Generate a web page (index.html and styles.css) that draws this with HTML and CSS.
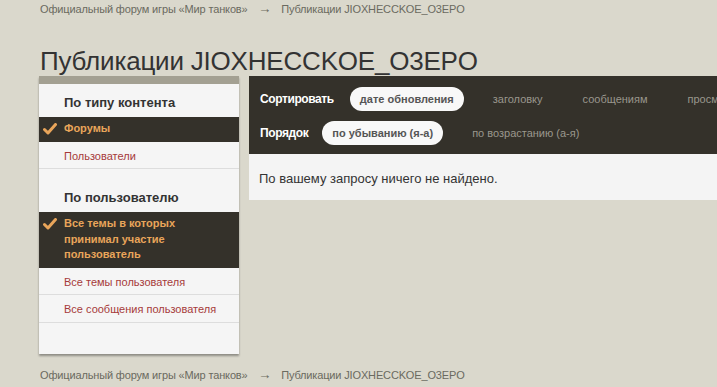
FILE: index.html
```html
<!DOCTYPE html>
<html lang="ru">
<head>
    <meta charset="UTF-8">
    <title>Публикации JIOXHECCKOE_O3EPO</title>
    <link rel="stylesheet" href="styles.css">
</head>
<body>
    <div class="page">
        <div class="breadcrumbs">
            <a href="#">Официальный форум игры «Мир танков»</a>
            <span class="arrow">→</span>
            <span>Публикации JIOXHECCKOE_O3EPO</span>
        </div>

        <h1 class="title">Публикации JIOXHECCKOE_O3EPO</h1>

        <div class="layout">
            <div class="sidebar">
                <div class="side-head">По типу контента</div>
                <ul class="side-list">
                    <li class="active">
                        <svg class="check" width="14" height="12" viewBox="0 0 14 12"><path d="M1.5 6.5 L5 10 L12.5 1.5" fill="none" stroke="#e9a55a" stroke-width="3" stroke-linecap="round" stroke-linejoin="round"/></svg>
                        Форумы
                    </li>
                    <li><a href="#">Пользователи</a></li>
                </ul>

                <div class="side-head">По пользователю</div>
                <ul class="side-list">
                    <li class="active">
                        <svg class="check" width="14" height="12" viewBox="0 0 14 12"><path d="M1.5 6.5 L5 10 L12.5 1.5" fill="none" stroke="#e9a55a" stroke-width="3" stroke-linecap="round" stroke-linejoin="round"/></svg>
                        Все темы в которых принимал участие пользователь
                    </li>
                    <li><a href="#">Все темы пользователя</a></li>
                    <li><a href="#">Все сообщения пользователя</a></li>
                </ul>
            </div>

            <div class="main">
                <div class="filters">
                    <div class="filter-row">
                        <span class="filter-label">Сортировать</span>
                        <span class="pill selected">дате обновления</span>
                        <a href="#" class="pill">заголовку</a>
                        <a href="#" class="pill">сообщениям</a>
                        <a href="#" class="pill">просмотрам</a>
                    </div>
                    <div class="filter-row">
                        <span class="filter-label short">Порядок</span>
                        <span class="pill selected">по убыванию (я-а)</span>
                        <a href="#" class="pill">по возрастанию (а-я)</a>
                    </div>
                </div>
                <div class="results">По вашему запросу ничего не найдено.</div>
            </div>
        </div>

        <div class="breadcrumbs bottom">
            <a href="#">Официальный форум игры «Мир танков»</a>
            <span class="arrow">→</span>
            <span>Публикации JIOXHECCKOE_O3EPO</span>
        </div>
    </div>
</body>
</html>
```

FILE: styles.css
```css
body {
    margin: 0;
    background-color: #dad8cc;
    font-family: 'Liberation Sans', Arial, sans-serif;
    color: #333;
    overflow: hidden;
}

.page {
    padding-left: 39px;
}

.breadcrumbs {
    font-size: 11px;
    letter-spacing: -0.15px;
    color: #6a6a60;
    padding: 3px 0 0 1px;
    height: 15px;
    white-space: nowrap;
}

.breadcrumbs a {
    color: #6a6a60;
    text-decoration: none;
}

.breadcrumbs .arrow {
    display: inline-block;
    margin: 0 6px 0 8px;
    font-size: 14px;
    line-height: 11px;
    transform: scaleX(0.95);
}

.breadcrumbs.bottom {
    padding-top: 15px;
}

.title {
    margin: 28px 0 0 1px;
    font-size: 26px;
    letter-spacing: -0.2px;
    font-weight: normal;
    line-height: 30px;
    color: #333;
    white-space: nowrap;
}

.layout {
    display: flex;
    gap: 10px;
    align-items: flex-start;
}

.sidebar {
    width: 200px;
    flex-shrink: 0;
    background-color: #f5f5f5;
    border-top: 8px solid #a3a092;
    padding-bottom: 21px;
    box-shadow: 0 2px 2px rgba(0, 0, 0, 0.35);
}

.side-head {
    font-size: 13px;
    font-weight: bold;
    color: #333;
    padding: 11px 0 0 25px;
    height: 22px;
}

.side-list {
    list-style: none;
    margin: 0 0 10px 0;
    padding: 0;
}

.side-list li {
    font-size: 11px;
    line-height: 15.5px;
    padding: 7px 10px 4px 25px;
    border-bottom: 1px solid #dddddd;
    position: relative;
}

.side-list li a {
    color: #a63a3a;
    text-decoration: none;
}

.side-list li.active {
    background-color: #34312a;
    color: #e9a55a;
    font-weight: bold;
    border-bottom: none;
    padding-top: 4px;
    padding-bottom: 5px;
}

.check {
    position: absolute;
    left: 4px;
    top: 6px;
}

.main {
    flex: 1;
    min-width: 0;
    overflow: hidden;
}

.filters {
    background-color: #34312a;
    padding: 11px 0 9px 11px;
}

.filter-row {
    display: flex;
    align-items: center;
    white-space: nowrap;
    height: 24px;
}

.filter-row + .filter-row {
    margin-top: 10px;
}

.filter-label {
    color: #fff;
    font-size: 12px;
    font-weight: bold;
    letter-spacing: -0.4px;
    margin-right: 16px;
}

.filter-label.short {
    margin-right: 14px;
}

.pill {
    font-size: 11px;
    color: #9a978d;
    text-decoration: none;
    padding: 0 20px;
    line-height: 24px;
    border-radius: 12px;
}

.pill.selected {
    background-color: #f8f8f8;
    color: #555;
    font-weight: bold;
    padding: 0 10px;
    margin-right: 9px;
}

.results {
    background-color: #f4f4f4;
    font-size: 13px;
    padding: 17px 10px 14px 10px;
    height: 15px;
}
```
